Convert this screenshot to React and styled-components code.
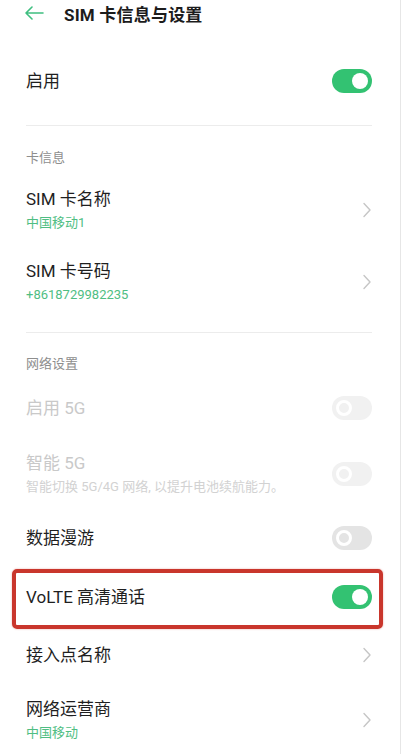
import React from "react";
import styled, { createGlobalStyle } from "styled-components";

const GlobalStyle = createGlobalStyle`
  html, body {
    margin: 0;
    padding: 0;
    background: #ffffff;
  }
  body {
    font-family: Roboto, "Noto Sans CJK SC", sans-serif;
    -webkit-font-smoothing: antialiased;
  }
`;

const Page = styled.div`
  width: 400px;
  height: 754px;
  overflow: hidden;
  background: #ffffff;
  border-right: 1px solid #e6e6e6;
`;

const Header = styled.div`
  display: flex;
  align-items: center;
  gap: 20px;
  height: 26px;
  padding-left: 24px;
`;

const Title = styled.h1`
  margin: 0;
  font-size: 17px;
  font-weight: 700;
  color: #1c1c1c;
  letter-spacing: 0.2px;
`;

const List = styled.div`
  padding: 0 28px 0 26px;
`;

const Row = styled.div`
  display: flex;
  align-items: center;
  justify-content: space-between;
  height: ${(p) => p.$h || 56}px;
  margin-top: ${(p) => p.$top || 0}px;
`;

const TextBlock = styled.div`
  display: flex;
  flex-direction: column;
`;

const Label = styled.span`
  font-size: 17px;
  line-height: 22px;
  color: ${(p) => (p.$dim ? "#c9c9c9" : "#1f1f1f")};
`;

const Sub = styled.span`
  margin-top: 4px;
  font-size: 13px;
  line-height: 18px;
  color: ${(p) => (p.$dim ? "#d2d2d2" : "#4fbe83")};
`;

const Divider = styled.div`
  height: 1px;
  background: #ececec;
  margin-top: ${(p) => p.$top}px;
`;

const Section = styled.div`
  padding: ${(p) => p.$top}px 0 8px;
  font-size: 13px;
  line-height: 16px;
  color: #8e8e8e;
`;

const Highlight = styled.div`
  margin: 5px -11px 0 -14px;
  padding: 0 7px 4px 10px;
  border: 4px solid #c9362c;
  border-radius: 5px;
  box-shadow: 0 0 2px rgba(201, 54, 44, 0.45);
`;

const Track = styled.span`
  position: relative;
  flex: none;
  width: 40px;
  height: 24px;
  border-radius: 12px;
  background: ${(p) => (p.$on ? "#33c272" : p.$dim ? "#f1f1f1" : "#e4e4e4")};

  &::after {
    content: "";
    position: absolute;
    top: 4px;
    left: ${(p) => (p.$on ? "20px" : "4px")};
    width: ${(p) => (p.$on ? "16px" : "10px")};
    height: ${(p) => (p.$on ? "16px" : "10px")};
    border-radius: 50%;
    background: ${(p) => (p.$on ? "#ffffff" : "transparent")};
    border: ${(p) => (p.$on ? "none" : "3px solid #ffffff")};
  }
`;

const Chevron = () => (
  <svg width="10" height="16" viewBox="0 0 10 16" fill="none">
    <polyline
      points="2,1.5 8,8 2,14.5"
      stroke="#c6c6c6"
      strokeWidth="1.4"
      strokeLinecap="round"
      strokeLinejoin="round"
    />
  </svg>
);

const BackArrow = () => (
  <svg width="20" height="14" viewBox="0 0 20 14" fill="none">
    <path
      d="M19 7H2M8 1L2 7l6 6"
      stroke="#3fbf80"
      strokeWidth="1.6"
      strokeLinecap="round"
      strokeLinejoin="round"
    />
  </svg>
);

export default function App() {
  return (
    <Page>
      <GlobalStyle />
      <Header>
        <BackArrow />
        <Title>SIM 卡信息与设置</Title>
      </Header>
      <List>
        <Row $top={27}>
          <Label>启用</Label>
          <Track $on />
        </Row>
        <Divider $top={16} />

        <Section $top={24}>卡信息</Section>
        <Row $h={72}>
          <TextBlock>
            <Label>SIM 卡名称</Label>
            <Sub>中国移动1</Sub>
          </TextBlock>
          <Chevron />
        </Row>
        <Row $h={72}>
          <TextBlock>
            <Label>SIM 卡号码</Label>
            <Sub>+8618729982235</Sub>
          </TextBlock>
          <Chevron />
        </Row>
        <Divider $top={14} />

        <Section $top={23}>网络设置</Section>
        <Row>
          <Label $dim>启用 5G</Label>
          <Track $dim />
        </Row>
        <Row $h={76}>
          <TextBlock>
            <Label $dim>智能 5G</Label>
            <Sub $dim>智能切换 5G/4G 网络, 以提升电池续航能力。</Sub>
          </TextBlock>
          <Track $dim />
        </Row>
        <Row $h={52}>
          <Label>数据漫游</Label>
          <Track />
        </Row>
        <Highlight>
          <Row $h={48}>
            <Label>VoLTE 高清通话</Label>
            <Track $on />
          </Row>
        </Highlight>
        <Row $h={52}>
          <Label>接入点名称</Label>
          <Chevron />
        </Row>
        <Row $h={78}>
          <TextBlock>
            <Label>网络运营商</Label>
            <Sub>中国移动</Sub>
          </TextBlock>
          <Chevron />
        </Row>
      </List>
    </Page>
  );
}
